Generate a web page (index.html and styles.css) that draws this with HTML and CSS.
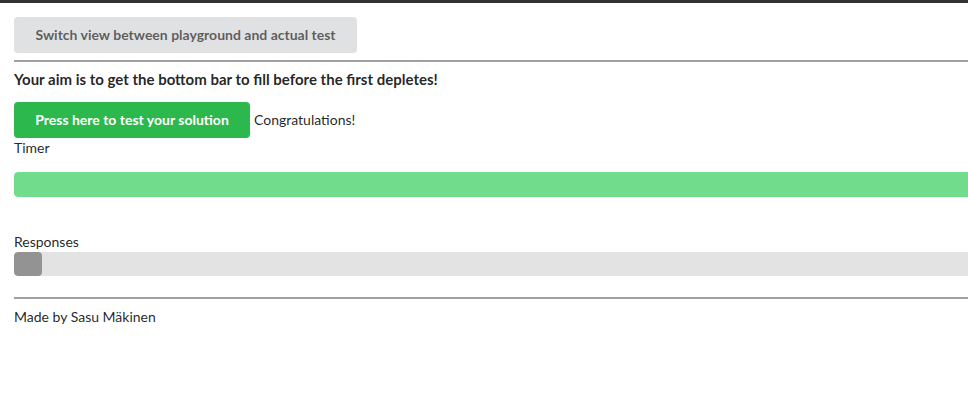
FILE: index.html
```html
<!DOCTYPE html>
<html>
<head>
<meta charset="utf-8">
<link rel="stylesheet" href="styles.css">
</head>
<body>
<div class="topline"></div>
<div class="page">
  <button class="btn btn-grey">Switch view between playground and actual test</button>
  <hr class="rule rule-top">
  <h4 class="aim">Your aim is to get the bottom bar to fill before the first depletes!</h4>
  <div class="actions">
    <button class="btn btn-green">Press here to test your solution</button>
    <span class="msg">Congratulations!</span>
  </div>
  <div class="label">Timer</div>
  <div class="bar bar-timer"><div class="fill fill-timer" style="width:100%"></div></div>
  <div class="label label-resp">Responses</div>
  <div class="bar bar-resp"><div class="fill fill-resp" style="width:28px"></div></div>
  <hr class="rule rule-bottom">
  <div class="footer">Made by Sasu Mäkinen</div>
</div>
</body>
</html>
```
FILE: styles.css
```css
html, body {
  margin: 0;
  padding: 0;
  overflow: hidden;
  background: #fff;
}
body {
  font-family: Lato, "Open Sans", sans-serif;
  font-size: 14px;
  color: rgba(0,0,0,0.87);
  line-height: 1.2857;
}
.topline {
  height: 3px;
  background: #333;
}
.page {
  padding: 14px 0 0 14px;
  width: 1100px;
}
.btn {
  font-family: Lato, "Open Sans", sans-serif;
  font-size: 14px;
  font-weight: 700;
  border: none;
  border-radius: 4px;
  height: 36px;
  padding: 0 21px;
  line-height: 1;
  display: block;
  cursor: pointer;
}
.btn-grey {
  background: #e0e1e2;
  color: rgba(0,0,0,0.6);
  width: 343px;
}
.btn-green {
  background: #2cb84c;
  color: #fff;
  width: 236px;
}
.rule {
  border: none;
  border-top: 2px solid #a0a0a0;
  margin: 0;
  height: 0;
}
.rule-top { margin-top: 7px; }
.aim {
  margin: 8px 0 0 0;
  font-size: 15px;
  font-weight: 700;
  line-height: 18px;
}
.actions {
  margin-top: 14px;
  display: flex;
  align-items: center;
  gap: 4px;
}
.msg { font-size: 14px; }
.label {
  font-size: 14px;
  line-height: 18px;
  margin-top: 1px;
}
.bar {
  height: 25px;
  border-radius: 4px 0 0 4px;
  overflow: hidden;
}
.bar-timer {
  margin-top: 15px;
}
.fill {
  height: 100%;
  border-radius: 4px;
}
.fill-timer { background: #70dc8c; }
.label-resp { margin-top: 36px; }
.bar-resp {
  margin-top: 1px;
  background: #e3e3e3;
  height: 24px;
}
.fill-resp { background: #939393; }
.rule-bottom { margin-top: 21px; }
.footer {
  margin-top: 9px;
  line-height: 18px;
}
```
